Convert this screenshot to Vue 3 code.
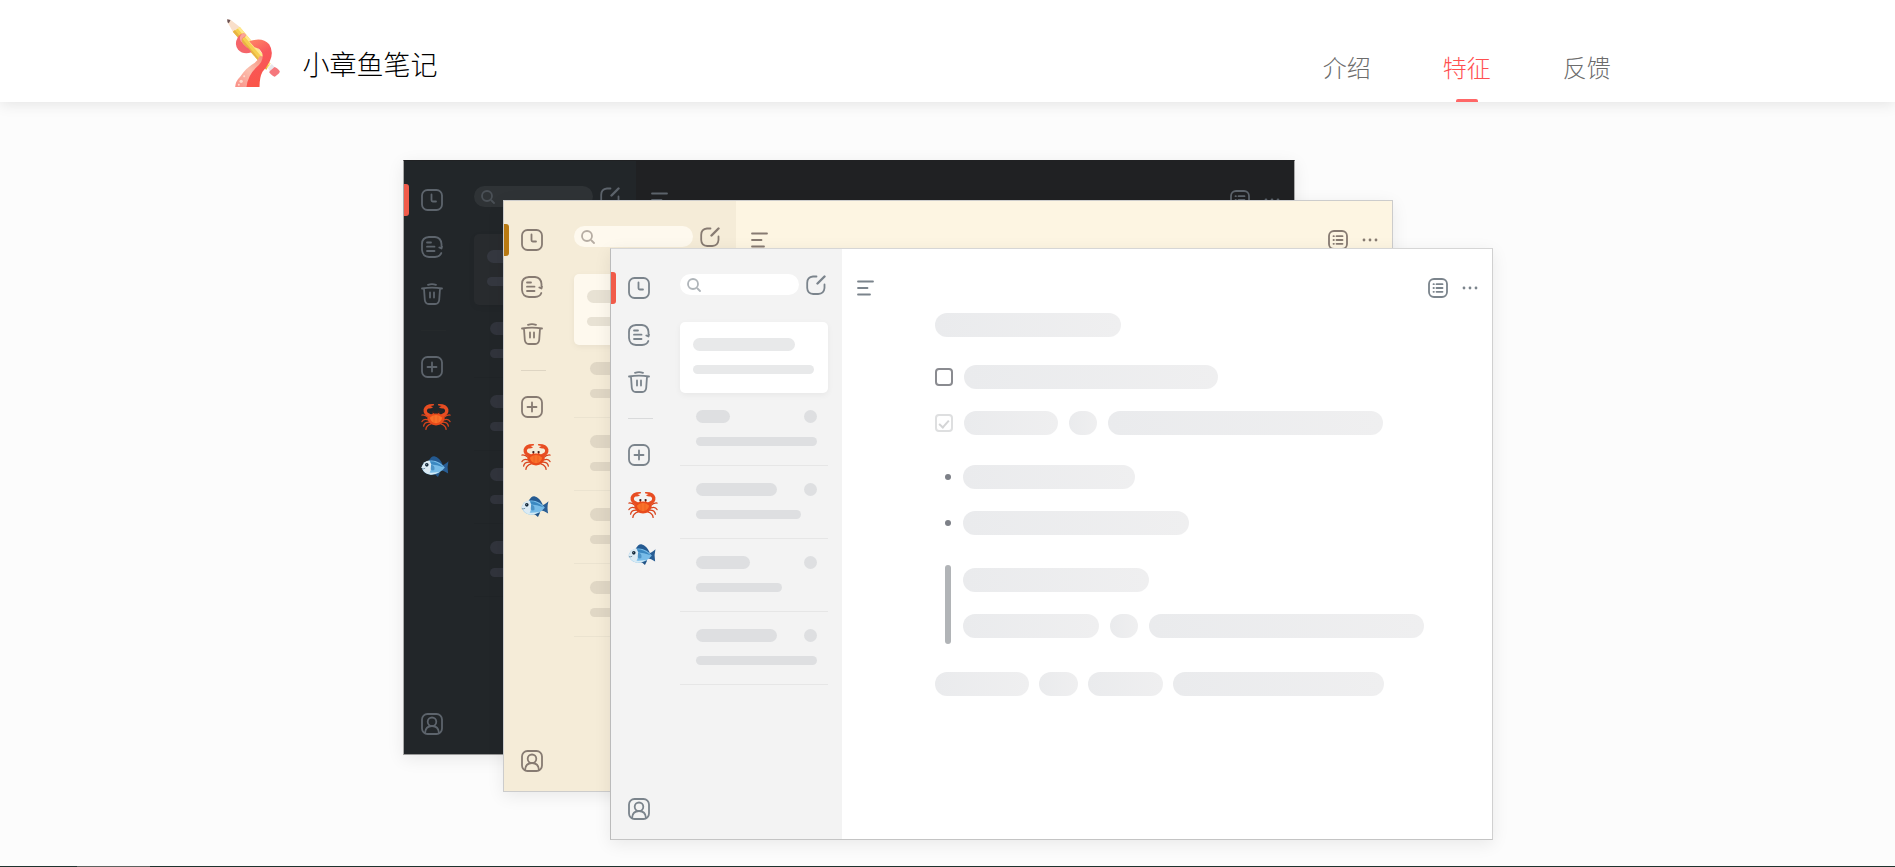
<script setup>
import { ref } from 'vue';

const links = [
  { id: 'intro', text: '介绍' },
  { id: 'features', text: '特征' },
  { id: 'feedback', text: '反馈' }
];
const active = ref('features');

const themes = ['dark', 'cream', 'light'];

const notes = [
  { title: 34, body: 121 },
  { title: 81, body: 105 },
  { title: 54, body: 86 },
  { title: 81, body: 121 }
];
</script>

<template>
  <!-- shared icons -->
  <svg class="sprite" aria-hidden="true">
    <symbol id="i-clock" viewBox="0 0 22 22">
      <rect x="1" y="1" width="20" height="20" rx="5.5" />
      <path d="M10.5 5.5v5.8q0 1.2 1.2 1.2h3.3" />
    </symbol>
    <symbol id="i-notes" viewBox="0 0 22 22">
      <path d="M20.5 12V8Q20 1.5 14 1H8Q1 1.5 1 8v6q.5 6.5 7 7h6q5-.3 6.3-4M18.3 11.500l2.200 1 .5-2" />
      <path d="M6 6.5h4M6 10.7h7.5M6 15h7.5" />
    </symbol>
    <symbol id="i-trash" viewBox="0 0 22 22">
      <path d="M1 5.5q10-1.8 20 0M7 1.8q4-1.3 8 0M3 5.5l.8 11.5q.5 3.8 4 4h6.4q3.5-.2 4-4L19 5.5M9 9.5v5M13 9.5v5" />
    </symbol>
    <symbol id="i-plus" viewBox="0 0 22 22">
      <rect x="1" y="1" width="20" height="20" rx="5.5" />
      <path d="M11 6.5v9M6.5 11h9" />
    </symbol>
    <symbol id="i-user" viewBox="0 0 22 22">
      <rect x="1" y="1" width="20" height="20" rx="5.5" />
      <circle cx="11" cy="8.8" r="4.3" />
      <path d="M4 20q.5-7 7-7t7 7" />
    </symbol>
    <symbol id="i-edit" viewBox="0 0 20 20">
      <path d="M10.5 1.5H7Q1.2 2 1.2 8v5q.3 5.7 6 6h5q5.8-.3 6.300-6v-3.500" />
      <path d="M11.5 8.5l7-7" stroke-width="2.4" />
    </symbol>
    <symbol id="i-search" viewBox="0 0 14 14">
      <circle cx="6" cy="6" r="5" />
      <path d="M10.5 10.5l2.500 2.500" />
    </symbol>
    <symbol id="i-menu" viewBox="0 0 17 16">
      <path d="M1 1.5h15M1 8h9.5M1 14.5h12" />
    </symbol>
    <symbol id="i-outline" viewBox="0 0 20 20">
      <rect x="1" y="1" width="18" height="18" rx="5" />
      <path d="M8.500 6.200h6M8.500 10h6M8.500 13.800h6M5.500 6.200h.4M5.500 10h.4M5.500 13.800h.4" />
    </symbol>
    <symbol id="i-more" viewBox="0 0 16 4">
      <g fill="currentColor" stroke="none">
        <circle cx="2" cy="2" r="1.400" /><circle cx="8" cy="2" r="1.400" /><circle cx="14" cy="2" r="1.400" />
      </g>
    </symbol>
    <symbol id="i-crab" viewBox="0 0 92 84">
      <g fill="none" stroke="#d8431c" stroke-width="4" stroke-linecap="round">
        <path d="M24 45Q12 34 3 36M22 51Q8 46 3 56M25 58Q10 58 8 70M31 63Q16 68 15 80" />
        <path d="M68 45Q80 34 89 36M70 51Q84 46 89 56M67 58Q82 58 84 70M61 63Q76 68 77 80" />
        <path d="M38 36v-9M54 36v-9" />
      </g>
      <path d="M28 44Q5 36 8 18Q13 1 39 2Q42 5 38 7L29 8L37 12Q31 17 23 16Q15 21 20 28L34 36Z" fill="#e84d22" />
      <path d="M64 44Q87 36 84 18Q79 1 53 2Q50 5 54 7L63 8L55 12Q61 17 69 16Q77 21 72 28L58 36Z" fill="#e84d22" />
      <path d="M20 46Q24 31 46 31T72 46Q70 67 46 68Q22 67 20 46Z" fill="#e84a1b" />
      <path d="M27 44Q34 36 46 36T65 44Q61 60 46 61Q31 60 27 44Z" fill="#f9702a" />
      <path d="M40 41v17M52 41v17" stroke="#e85b1e" stroke-width="2" />
      <circle cx="38" cy="27" r="3.500" fill="#3b2020" /><circle cx="54" cy="27" r="3.500" fill="#3b2020" />
    </symbol>
    <symbol id="i-fish" viewBox="0 0 84 64">
      <path d="M22 17Q30 0 40 1Q56 4 66 27L36 31Z" fill="#245a91" />
      <path d="M54 32Q74 26 83 16Q78 34 82 53Q72 46 54 42Z" fill="#285d94" />
      <path d="M28 51L43 57L51 64L57 52L54 45Z" fill="#235486" />
      <path d="M1 34Q8 13 32 14Q56 15 72 35Q57 55 32 57Q8 57 1 34Z" fill="#78bce8" />
      <path d="M1 34Q8 15 25 14Q37 32 24 55Q7 52 1 34Z" fill="#dcebf4" />
      <path d="M27 16Q48 16 68 34Q47 26 31 26Z" fill="#3b88c1" />
      <path d="M10 49Q31 54 56 48Q45 56 29 57Q18 56 10 49Z" fill="#d6ebf5" />
      <path d="M30 27Q43 28 40 43Q33 47 29 40Z" fill="#4c93c7" />
      <circle cx="17" cy="27" r="5.500" fill="#152b3c" /><circle cx="15.500" cy="25.500" r="1.500" fill="#fff" />
      <path d="M3 39q5 1 8-1" fill="none" stroke="#456d88" stroke-width="2" />
    </symbol>
  </svg>

  <div class="page">
    <header class="topbar">
      <a class="brand" href="#intro">
        <svg class="logo" viewBox="78 54 164 210" aria-hidden="true">
          <defs>
            <linearGradient id="arm" x1="0" y1="0" x2="0.300" y2="1">
              <stop offset="0" stop-color="#ff8b68" />
              <stop offset="0.450" stop-color="#f9575c" />
              <stop offset="1" stop-color="#fa5548" />
            </linearGradient>
            <linearGradient id="belly" x1="1" y1="0" x2="0" y2="1">
              <stop offset="0" stop-color="#f58b78" />
              <stop offset="0.500" stop-color="#fbbfae" />
              <stop offset="1" stop-color="#fa8e85" />
            </linearGradient>
          </defs>
          <path d="M81 58L92 60L119 81L98 95L83 68Z" fill="#f9dfca" />
          <path d="M81 58L91 60L86 70L82 67Z" fill="#6b5154" />
          <path d="M119 81L211 191L198 209L98 95Z" fill="#f6cf50" />
          <path d="M119 81L211 191L207 197L112 85Z" fill="#ffe88c" />
          <path d="M98 95L104 90L201 205L198 209Z" fill="#e8b443" />
          <path d="M203 204L215 192L223 201L209 213Z" fill="#e9e6ea" />
          <path d="M209 213L223 201Q230 202 239 214Q239 221 224 230Q219 231 207 217Z" fill="#f5777c" />
          <path d="M105 261Q106 243 120 230Q139 202 163 189Q174 180 179 168L195 170Q202 190 177 215L151 261Z" fill="url(#belly)" />
          <path d="M139 261Q143 226 169 202Q193 181 186 160Q179 144 163 142L147 124Q187 110 207 133Q222 156 209 184Q200 202 187 215Q178 231 178 261Z" fill="url(#arm)" />
          <path d="M154 157Q129 165 114 149Q101 133 113 112Q122 98 134 101Q141 109 129 113Q120 119 129 131Q138 141 146 146Z" fill="#f5656a" />
          <path d="M122 104Q132 98 136 102Q139 108 128 113Q122 119 127 128Q114 119 122 104Z" fill="#fba59a" />
          <g fill="#ffd9cc">
            <circle cx="123" cy="244" r="5" /><circle cx="132" cy="229" r="3" /><circle cx="116" cy="254" r="3" />
          </g>
        </svg>
        <span class="brand-name">小章鱼笔记</span>
      </a>
      <nav class="nav">
        <a
          v-for="link in links"
          :key="link.id"
          :href="'#' + link.id"
          class="nav-link"
          :class="{ active: active === link.id }"
          @click="active = link.id"
        >{{ link.text }}</a>
      </nav>
    </header>

    <main class="features">
      <div class="stage">
        <section v-for="theme in themes" :key="theme" class="window" :class="theme">
          <aside class="rail">
            <button class="tab current" type="button" aria-label="最近"><svg class="icon"><use href="#i-clock" /></svg></button>
            <button class="tab" type="button" aria-label="全部笔记"><svg class="icon"><use href="#i-notes" /></svg></button>
            <button class="tab" type="button" aria-label="回收站"><svg class="icon"><use href="#i-trash" /></svg></button>
            <hr class="rail-line">
            <button class="tab" type="button" aria-label="新建分类"><svg class="icon"><use href="#i-plus" /></svg></button>
            <button class="tab" type="button" aria-label="螃蟹"><svg class="crab"><use href="#i-crab" /></svg></button>
            <button class="tab" type="button" aria-label="小鱼"><svg class="fish"><use href="#i-fish" /></svg></button>
            <button class="tab account" type="button" aria-label="账户"><svg class="icon"><use href="#i-user" /></svg></button>
          </aside>

          <div class="list">
            <div class="search-row">
              <label class="search">
                <svg class="search-icon"><use href="#i-search" /></svg>
                <input type="search" aria-label="搜索">
              </label>
              <button class="tool" type="button" aria-label="写笔记"><svg class="icon-sm"><use href="#i-edit" /></svg></button>
            </div>
            <div class="card">
              <i class="line title w-102"></i>
              <i class="line w-121"></i>
            </div>
            <div v-for="(note, i) in notes" :key="i" class="note">
              <div class="note-head">
                <i class="line title" :style="{ width: note.title + 'px' }"></i>
                <i class="line title round"></i>
              </div>
              <i class="line" :style="{ width: note.body + 'px' }"></i>
            </div>
          </div>

          <article class="editor">
            <div class="toolbar">
              <button class="tool" type="button" aria-label="目录"><svg class="menu-icon"><use href="#i-menu" /></svg></button>
              <button class="tool push" type="button" aria-label="大纲"><svg class="icon-sm"><use href="#i-outline" /></svg></button>
              <button class="tool" type="button" aria-label="更多"><svg class="more-icon"><use href="#i-more" /></svg></button>
            </div>
            <div class="doc">
              <i class="pill w-186"></i>
              <div class="group">
                <div class="task">
                  <input type="checkbox" aria-label="待办">
                  <i class="pill w-254"></i>
                </div>
                <div class="task">
                  <input type="checkbox" aria-label="已办" checked>
                  <i class="pill w-94"></i><i class="pill w-28"></i><i class="pill w-275"></i>
                </div>
              </div>
              <div class="group bullets">
                <div class="bullet"><i class="pill w-172"></i></div>
                <div class="bullet"><i class="pill w-226"></i></div>
              </div>
              <div class="quote">
                <i class="pill w-186"></i>
                <div class="words"><i class="pill w-136"></i><i class="pill w-28"></i><i class="pill w-275"></i></div>
              </div>
              <div class="words tight">
                <i class="pill w-94"></i><i class="pill w-39"></i><i class="pill w-75"></i><i class="pill w-211"></i>
              </div>
            </div>
          </article>
        </section>
      </div>
    </main>

    <footer class="footer"><div class="footer-tab"></div></footer>
  </div>
</template>

<style>
body {
  background: #fcfcfc;
}
</style>

<style scoped>
.sprite { position: absolute; width: 0; height: 0; }

.page {
  min-height: 100vh;
  display: flex;
  flex-direction: column;
  box-sizing: border-box;
  font-family: "Noto Sans CJK SC", sans-serif;
  font-weight: 300;
}

.topbar {
  position: relative;
  display: flex;
  justify-content: space-between;
  height: 102px;
  padding: 0 15% 0 12%;
  background: #fff;
  box-shadow: 0 2px 14px rgba(0, 0, 0, 0.1);
}

.brand {
  display: flex;
  align-items: flex-start;
  gap: 21px;
  margin-left: -1px;
  padding-top: 18px;
  box-sizing: border-box;
  color: #000;
  text-decoration: none;
}
.logo { width: 55px; height: 70px; }
.brand-name { font-size: 27px; line-height: 40px; padding-top: 26px; }

.nav { display: flex; gap: 72px; }
.nav-link {
  display: flex;
  flex-direction: column;
  align-items: center;
  justify-content: space-between;
  padding-top: 49px;
  font-size: 24px;
  line-height: 36px;
  color: #6c6c6c;
  text-decoration: none;
}
.nav-link.active { color: #ff5050; }
.nav-link.active::after {
  content: "";
  width: 22px; height: 3px;
  border-radius: 2px 2px 0 0;
  background: #ff6767;
}

.features { flex: 1; padding: 58px 0 26px; }

/* the three themed windows share one grid cell and are fanned out by margins */
.stage {
  display: grid;
  max-width: 1091px;
  min-height: 680px;
  margin: 0 auto;
}

.window {
  --panel: #f3f3f3;
  --paper: #fff;
  --ink: #7b848c;
  --field: #fff;
  --card: #fff;
  --card-line: #e8e9ea;
  --line: #dedfe1;
  --rule: #e6e6e6;
  --rail-rule: #d9dadb;
  --mark: #f15b4a;
  --pill: linear-gradient(90deg, #eaebed, #efeff0);

  grid-area: 1 / 1;
  isolation: isolate;
  display: flex;
  box-sizing: border-box;
  border: 1px solid #ccc;
  background: var(--paper);
  box-shadow: 0 4px 16px rgba(0, 0, 0, 0.08);
  color: var(--ink);
}
.window.dark {
  --panel: #222629;
  --paper: #202123;
  --ink: #5d646c;
  --field: #2f3336;
  --card: #282b2e;
  --card-line: #353840;
  --line: #31343c;
  --rule: #202427;
  --rail-rule: #25292b;
  --pill: #303238;
  margin: 0 198px 85px 1px;
  border-color: #202123 #aaa #999 #aaa;
}
.window.cream {
  --panel: #f5ecd8;
  --paper: #fdf5e2;
  --ink: #877b72;
  --field: #fef9ee;
  --card: #fef9ee;
  --card-line: #e8e2d4;
  --line: #e0d7c5;
  --rule: #ebe3d0;
  --rail-rule: #ded5c3;
  --mark: #b97a12;
  --pill: #eee5d3;
  margin: 40px 100px 48px 101px;
}
.window.light { margin: 88px 0 0 208px; border-color: #d6d6d6 #d0d0d0 #c4c4c4 #bbb; }

button {
  display: flex;
  padding: 0;
  border: 0;
  background: none;
  color: inherit;
  cursor: pointer;
}
svg { fill: none; stroke: currentColor; stroke-width: 1.8; stroke-linecap: round; stroke-linejoin: round; }
.logo, .crab, .fish { stroke: none; }
.icon { width: 22px; height: 22px; }
.icon-sm { width: 20px; height: 20px; }
.menu-icon { width: 17px; height: 16px; }
.more-icon { width: 16px; height: 4px; }
.crab { width: 30px; height: 28px; }
.fish { width: 28px; height: 21px; }

.rail {
  flex: none;
  display: flex;
  flex-direction: column;
  align-items: flex-start;
  gap: 25px;
  width: 70px;
  padding: 28px 0 19px 17px;
  box-sizing: border-box;
  background: var(--panel);
}
.light .rail { width: 69px; }
.tab { position: relative; }
.tab.current::before {
  content: "";
  position: absolute;
  left: -17px; top: -5px;
  width: 5px; height: 32px;
  border-radius: 0 3px 3px 0;
  background: var(--mark);
}
.rail-line { width: 25px; height: 1px; margin: 0; border: 0; background: var(--rail-rule); }
.account { margin-top: auto; }

.list { flex: none; width: 148px; padding: 25px 14px 0 0; background: var(--panel); }
.search-row { display: flex; align-items: center; justify-content: space-between; padding-right: 2px; }
.search {
  display: flex;
  align-items: center;
  gap: 4px;
  width: 119px;
  height: 21px;
  padding: 0 7px;
  box-sizing: border-box;
  border-radius: 11px;
  background: var(--field);
}
.search-icon { flex: none; width: 14px; height: 14px; opacity: 0.6; }
.search input {
  width: 100%;
  min-width: 0;
  padding: 0;
  border: 0;
  outline: 0;
  background: none;
  color: inherit;
  font-size: 12px;
}

.card {
  display: flex;
  flex-direction: column;
  gap: 14px;
  height: 71px;
  margin-top: 27px;
  padding: 16px 13px 0;
  box-sizing: border-box;
  border-radius: 5px;
  background: var(--card);
  box-shadow: 0 2px 6px rgba(0, 0, 0, 0.05);
}
.card .line { background: var(--card-line); }
.line { display: block; height: 9px; border-radius: 7px; background: var(--line); }
.line.title { height: 13px; }
.line.round { width: 13px; }
.note { padding: 17px 11px 19px 16px; border-bottom: 1px solid var(--rule); }
.note-head { display: flex; justify-content: space-between; margin-bottom: 14px; }

.editor { flex: 1; min-width: 0; overflow: hidden; }
.toolbar { display: flex; align-items: center; gap: 14px; padding: 29px 14px 0 15px; }
.push { margin-left: auto; }

.doc { display: flex; flex-direction: column; gap: 28px; padding: 15px 0 40px 93px; }
.group { display: flex; flex-direction: column; gap: 22px; }
.bullets { margin-top: 2px; }
.task, .words { display: flex; align-items: center; gap: 11px; }
.words.tight { gap: 10px; }
.task input {
  appearance: none;
  flex: none;
  display: grid;
  place-items: center;
  width: 18px; height: 18px;
  margin: 0;
  border: 2px solid #8a8b90;
  border-radius: 4px;
}
.task input:checked { border-color: #dedfe0; }
.task input:checked::after {
  content: "";
  width: 4px; height: 8px;
  border: solid #d4d5d6;
  border-width: 0 2px 2px 0;
  transform: rotate(42deg);
}
.bullet { display: flex; align-items: center; gap: 12px; padding-left: 10px; }
.bullet::before { content: ""; width: 6px; height: 6px; border-radius: 50%; background: #7d8087; }
.quote {
  position: relative;
  display: flex;
  flex-direction: column;
  gap: 22px;
  margin-top: 2px;
  padding: 3px 0 6px 28px;
}
.quote::before {
  content: "";
  position: absolute;
  left: 10px; top: 0; bottom: 0;
  width: 6px;
  border-radius: 3px;
  background: #b1b4b7;
}

.pill { flex: none; height: 24px; border-radius: 12px; background: var(--pill); }
.w-28 { width: 28px; }
.w-39 { width: 39px; }
.w-75 { width: 75px; }
.w-94 { width: 94px; }
.w-102 { width: 102px; }
.w-121 { width: 121px; }
.w-136 { width: 136px; }
.w-172 { width: 172px; }
.w-186 { width: 186px; }
.w-211 { width: 211px; }
.w-226 { width: 226px; }
.w-254 { width: 254px; }
.w-275 { width: 275px; }

.footer { display: flex; height: 1px; padding-left: 77px; background: #1f332e; }
.footer-tab { width: 73px; background: #5d625f; }
</style>
